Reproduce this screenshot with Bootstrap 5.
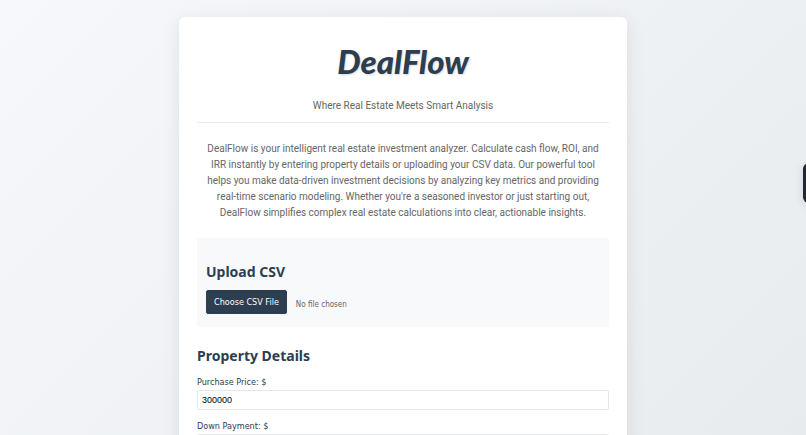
<!DOCTYPE html>
<html lang="en">
<head>
<meta charset="utf-8">
<meta name="viewport" content="width=device-width, initial-scale=1">
<title>DealFlow</title>
<link href="https://cdn.jsdelivr.net/npm/bootstrap@5.3.0/dist/css/bootstrap.min.css" rel="stylesheet">
<style>
:root { --ink: #2c3e50; --line: #e9ebed; }
body { font-family: "DejaVu Sans Condensed", "DejaVu Sans", sans-serif; font-size: 10px; line-height: 16px; color: #666; background: linear-gradient(135deg, #f6f8fb, #e8ebee) no-repeat fixed; }
.sheet { max-width: 448px; margin-top: 17px; padding: 18px; border-radius: 6px; box-shadow: 0 4px 18px rgba(44, 62, 80, .1); }
.masthead { padding-bottom: 8px; border-bottom: 1px solid var(--line); }
.brand { font: italic 900 33px/52px Lato, sans-serif; color: var(--ink); text-shadow: 1px 1px 2px rgba(44, 62, 80, .2); margin-bottom: 11px; }
.tagline, .intro { font-family: Roboto, sans-serif; }
.intro { padding: 18px 9px 17px; }
.section-title { font-family: "Noto Sans", sans-serif; font-size: 14px; line-height: 18px; font-weight: 700; color: var(--ink); margin-bottom: 9px; }
.upload { padding: 25px 9px 13px; background: #f8f9fb; }
.btn-file { --bs-btn-font-size: 9px; --bs-btn-line-height: 14px; --bs-btn-padding-x: 7px; --bs-btn-padding-y: 4px; --bs-btn-border-radius: 2px; --bs-btn-color: #fff; --bs-btn-bg: #2c3e50; --bs-btn-border-color: #2c3e50; --bs-btn-hover-color: #fff; --bs-btn-hover-bg: #34495e; }
.file-name { font-size: 8px; line-height: 16px; padding-top: 5px; margin-left: 9px; }
.details { padding-top: 20px; }
.form-label { font-size: 9px; line-height: 16px; color: var(--ink); }
.form-control { font: 9px/14px "Liberation Sans", Arial, sans-serif; color: #000; padding: 2px 4px; border: 1px solid #e4e7e9; border-radius: 2px; min-height: 20px; }
.side-tab { width: 40px; height: 40px; right: -37px; top: 163px; border-radius: 6px; background: #22282e; box-shadow: 0 2px 8px rgba(44, 62, 80, .15); }
</style>
</head>
<body>
<main class="sheet container bg-white">
  <header class="masthead text-center">
    <h1 class="brand">DealFlow</h1>
    <p class="tagline mb-0">Where Real Estate Meets Smart Analysis</p>
  </header>
  <p class="intro text-center mb-0">DealFlow is your intelligent real estate investment analyzer. Calculate cash flow, ROI, and IRR instantly by entering property details or uploading your CSV data. Our powerful tool helps you make data-driven investment decisions by analyzing key metrics and providing real-time scenario modeling. Whether you're a seasoned investor or just starting out, DealFlow simplifies complex real estate calculations into clear, actionable insights.</p>
  <section class="upload">
    <h2 class="section-title">Upload CSV</h2>
    <div class="d-flex align-items-center">
      <button type="button" class="btn btn-file">Choose CSV File</button>
      <span class="file-name">No file chosen</span>
    </div>
  </section>
  <form class="details">
    <h2 class="section-title">Property Details</h2>
    <div class="mb-2">
      <label class="form-label d-block mb-0" for="price">Purchase Price: $</label>
      <input class="form-control" id="price" type="text" inputmode="numeric" value="300000">
    </div>
    <div>
      <label class="form-label d-block mb-0" for="down">Down Payment: $</label>
      <input class="form-control" id="down" type="text" inputmode="numeric" value="">
    </div>
  </form>
</main>
<button type="button" class="side-tab position-fixed border-0 p-0" aria-label="Open panel"></button>
<script src="https://cdn.jsdelivr.net/npm/bootstrap@5.3.0/dist/js/bootstrap.bundle.min.js"></script>
</body>
</html>
